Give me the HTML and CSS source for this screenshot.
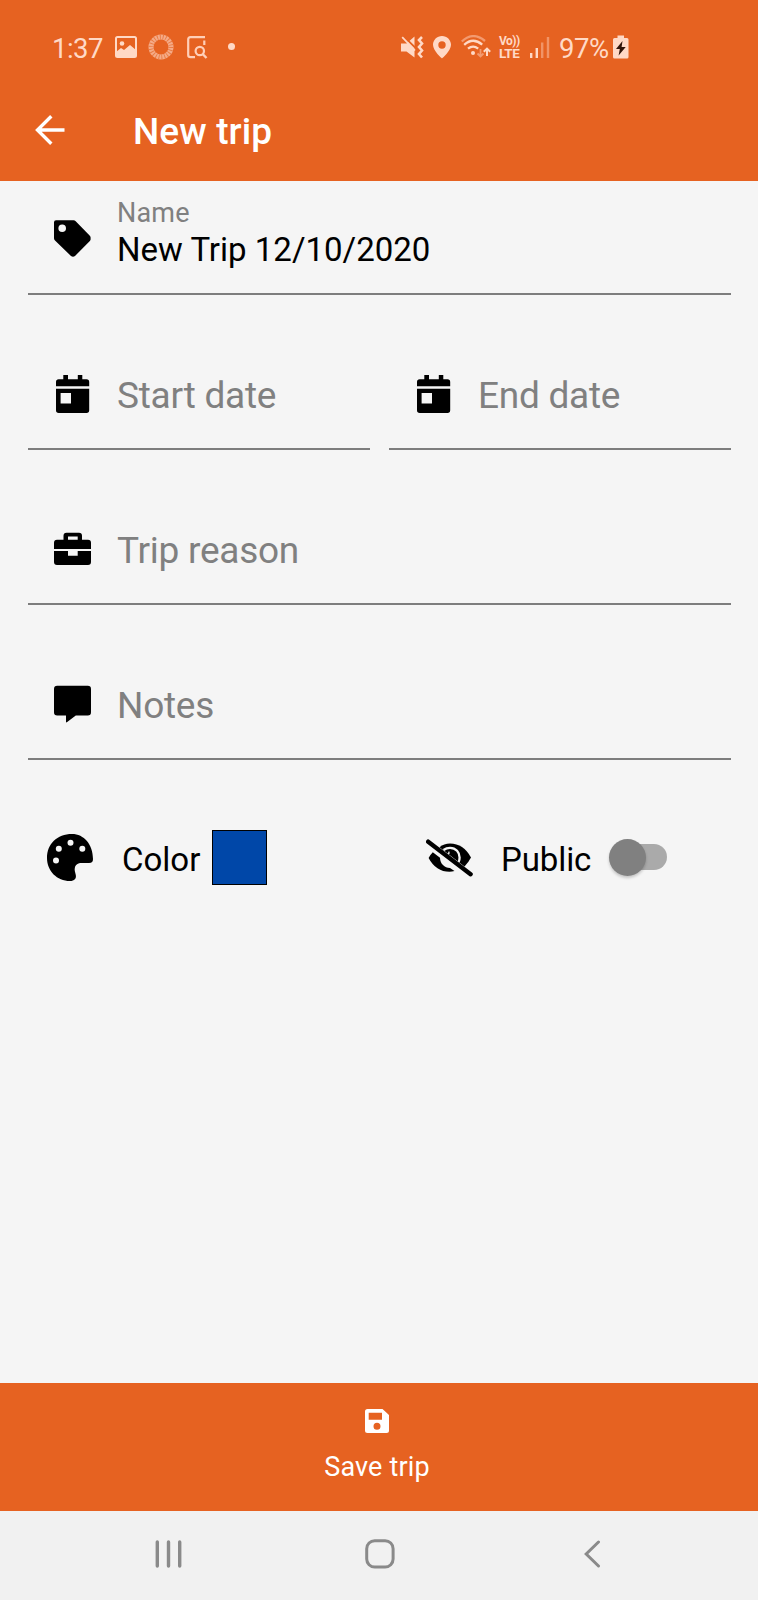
FILE: index.html
```
<!DOCTYPE html>
<html lang="en">
<head>
  <meta charset="UTF-8" />
  <title>New trip</title>
  <link rel="stylesheet" href="styles.css">
</head>
<body>

  <header class="top">
    <div class="status-bar">
      <div class="status-group">
        <span class="clock">1:37</span>
        <svg class="icon-image" width="22" height="22" viewBox="0 0 22 22">
          <rect x="1" y="1" width="20" height="20" rx="1.5" fill="none" stroke="#ffd9c6" stroke-width="2" />
          <circle cx="7" cy="7.5" r="2.3" fill="#ffd9c6" />
          <path d="M1 16 L6 12 L9 14 L15 9 L21 14 V21 H1 Z" fill="#ffd9c6" />
        </svg>
        <svg class="icon-ring" width="26" height="26" viewBox="0 0 26 26">
          <circle cx="13" cy="13" r="10" fill="none" stroke="#f5ab88" stroke-width="5" />
          <circle cx="13" cy="13" r="10" fill="none" stroke="#e97a42" stroke-width="5" stroke-dasharray="0.9 1.955" />
        </svg>
        <svg class="icon-doc" width="21" height="23" viewBox="0 0 21 23" fill="none" stroke="#ffcfb8" stroke-width="2.2">
          <path d="M18 1.2 H3.5 Q1.2 1.2 1.2 3.5 V19 Q1.2 21.2 3.5 21.2 H8 M17.3 4.5 V9" />
          <circle cx="12.8" cy="15" r="4.2" />
          <path d="M15.7 18 L19.5 22" stroke-width="2.4" />
        </svg>
        <span class="dot"></span>
      </div>
      <div class="status-group">
        <svg width="23" height="23" viewBox="0 0 23 23">
          <path d="M0 7.5 H5.5 L13.5 0.5 V21.5 L5.5 15.5 H0 Z" fill="#ffd9c6" />
          <path d="M2.5 0 L15.5 13" stroke="#e66221" stroke-width="1.8" />
          <path d="M1.2 1.2 L14 14.5" stroke="#ffd9c6" stroke-width="1.8" />
          <path d="M21 1 L18 4 L21 7.5 L18 11 L21 14.5 L18 18 L21 21.5" fill="none" stroke="#ffd9c6" stroke-width="2.6" />
        </svg>
        <svg class="icon-pin" width="18" height="23" viewBox="0 0 18 23">
          <path d="M9 0 C4 0 0 4 0 8.8 C0 15 9 22.5 9 22.5 C9 22.5 18 15 18 8.8 C18 4 14 0 9 0 Z M9 5.3 A3.7 3.7 0 1 1 9 12.7 A3.7 3.7 0 1 1 9 5.3 Z" fill="#ffd9c6" fill-rule="evenodd" />
        </svg>
        <svg class="icon-wifi" width="30" height="24" viewBox="0 0 30 24" fill="none" stroke-width="2.3">
          <path d="M0.8 6.5 Q12 -4 24 6" stroke="#f39a70" />
          <path d="M3.2 9.8 Q12 1.8 21.2 9.6" stroke="#ffd9c6" />
          <path d="M7 13.7 Q12 9.5 17.2 13.6" stroke="#ffd9c6" />
          <circle cx="12" cy="18" r="2" fill="#ffd9c6" />
          <path d="M19.5 14 V21 M16.5 18.5 L19.5 21.5 L22.5 18.5" stroke="#f39a70" stroke-width="1.8" />
          <path d="M26 21 V14 M22.8 16.8 L26 13.6 L29.2 16.8" stroke="#ffd9c6" stroke-width="2" />
        </svg>
        <span class="volte"><span class="vo">Vo))</span><span>LTE</span></span>
        <svg class="icon-signal" width="20" height="21" viewBox="0 0 20 21">
          <path d="M0 16 H2.4 V21 H0 Z M5.6 11 H8 V21 H5.6 Z" fill="#ffd9c6" />
          <path d="M11 5.5 H13.4 V21 H11 Z M16.8 0 H19.2 V21 H16.8 Z" fill="#f19467" />
        </svg>
        <span class="battery-text">97%</span>
        <svg class="icon-battery" width="16" height="24" viewBox="0 0 16 24">
          <path d="M4.5 0.5 H11 V3 H14 Q15.5 3 15.5 4.5 V22 Q15.5 23.5 14 23.5 H1.5 Q0 23.5 0 22 V4.5 Q0 3 1.5 3 H4.5 Z" fill="#ffd9c6" />
          <path d="M9.5 6 L3 14 H6.8 L5.6 20.5 L12.7 12 H8.6 Z" fill="#30150a" />
        </svg>
      </div>
    </div>

    <div class="app-bar">
      <svg class="back" width="30" height="30" viewBox="0 0 30 30" fill="none" stroke="#fff" stroke-width="3.4">
        <path d="M29.5 15 H2.5 M16.3 1.2 L2.5 15 L16.3 28.8" />
      </svg>
      <h1>New trip</h1>
    </div>
  </header>

  <main class="form">
    <div class="field name-field">
      <svg class="field-icon" width="38" height="38" viewBox="0 0 38 38">
        <path d="M2 0.3 H19.5 Q20.8 0.3 21.7 1.2 L35.6 15.5 Q36.6 16.5 36.6 17.5 V19.5 Q36.6 20.3 35.6 21.3 L21 36 Q19 37.6 17 36 L1 20.5 Q0 19.5 0 18.2 V2.3 Q0 0.3 2 0.3 Z M8.2 4.5 A3.8 3.8 0 1 0 8.2 12.1 A3.8 3.8 0 1 0 8.2 4.5 Z" fill-rule="evenodd" />
      </svg>
      <div class="field-text">
        <span class="label">Name</span>
        <span class="value">New Trip 12/10/2020</span>
      </div>
    </div>

    <div class="row">
      <div class="field">
        <svg class="field-icon" width="38" height="38" viewBox="0 0 38 38">
          <path d="M9.3 0 H14 V4.3 H23.8 V0 H28.3 V4.3 H32.5 Q35.2 4.3 35.2 7 V11.2 H2 V7 Q2 4.3 4.7 4.3 H9.3 Z" />
          <path d="M2 13.8 H35.2 V35.3 Q35.2 38 32.5 38 H4.7 Q2 38 2 35.3 Z M6.6 18 V28.6 H17 V18 Z" fill-rule="evenodd" />
        </svg>
        <span class="placeholder">Start date</span>
      </div>
      <div class="field">
        <svg class="field-icon" width="38" height="38" viewBox="0 0 38 38">
          <path d="M9.3 0 H14 V4.3 H23.8 V0 H28.3 V4.3 H32.5 Q35.2 4.3 35.2 7 V11.2 H2 V7 Q2 4.3 4.7 4.3 H9.3 Z" />
          <path d="M2 13.8 H35.2 V35.3 Q35.2 38 32.5 38 H4.7 Q2 38 2 35.3 Z M6.6 18 V28.6 H17 V18 Z" fill-rule="evenodd" />
        </svg>
        <span class="placeholder">End date</span>
      </div>
    </div>

    <div class="field">
      <svg class="field-icon" width="38" height="38" viewBox="0 -2 38 38">
        <path d="M0 17 V10.7 Q0 7.7 3 7.7 H9.5 V3.7 Q9.5 0.7 12.5 0.7 H25 Q28 0.7 28 3.7 V7.7 H34 Q37 7.7 37 10.7 V17 Z M14 4.6 V7.7 H23.7 V4.6 Z" fill-rule="evenodd" />
        <path d="M0 19 H14 V23.8 H23.7 V19 H37 V30 Q37 33 34 33 H3 Q0 33 0 30 Z" />
      </svg>
      <span class="placeholder">Trip reason</span>
    </div>

    <div class="field">
      <svg class="field-icon" width="38" height="38" viewBox="0 -0.5 38 38">
        <path d="M3.2 0.3 H33.8 Q37 0.3 37 3.5 V26.8 Q37 30 33.8 30 H21.8 L13.2 36.6 Q12 37.5 12 36 V30 H3.2 Q0 30 0 26.8 V3.5 Q0 0.3 3.2 0.3 Z" />
      </svg>
      <span class="placeholder">Notes</span>
    </div>

    <div class="options">
      <div class="option">
        <svg class="palette" width="46" height="47" viewBox="0 0 46 47">
          <path d="M25 0 C10 0 0 10 0 24 C0 37 10 47 23 47 C27.5 47 29.5 44.5 28.8 41 C28.2 38 27.3 36.5 27.8 34 C28.4 30.5 31 29 34.5 29 H42 C45 29 46 27.8 46 25 C46 10.5 37 0 25 0 Z" />
          <g fill="#f5f5f5">
            <circle cx="11.8" cy="14.8" r="3" />
            <circle cx="23.5" cy="8.7" r="3" />
            <circle cx="35.3" cy="14.8" r="3" />
            <circle cx="9" cy="26.4" r="3" />
          </g>
        </svg>
        <span class="option-text">Color</span>
        <span class="swatch"></span>
      </div>
      <div class="option">
        <svg class="eye" width="47" height="38" viewBox="0 0 47 38">
          <!-- upper right half of the eye -->
          <path d="M13.5 8.2 Q18 4.6 24 4.6 Q37.5 4.6 45 18.6 Q42.5 23.5 38.5 27.5 Z" />
          <path d="M17.5 11 Q20.5 8.8 24 8.8 C30 8.8 33.6 13.5 33.6 18.5 Q33.6 21 32.6 23" fill="none" stroke="#f5f5f5" stroke-width="2.3" />
          <path d="M22.8 12.6 Q23.6 15.6 20.5 15.6" fill="none" stroke="#f5f5f5" stroke-width="1.4" />
          <!-- lower left half -->
          <path d="M6.8 13.2 L14 18.8 C14.2 25 18.5 28.8 24 29 L28.5 32 Q26 32.8 23.5 32.8 Q10 32.8 2.6 19 Q4.2 15.8 6.8 13.2 Z" />
          <path d="M2.2 2.7 L44.6 35.2" stroke="#000" stroke-width="4.4" stroke-linecap="round" />
        </svg>
        <span class="option-text public">Public</span>
        <span class="switch"><span class="thumb"></span></span>
      </div>
    </div>
  </main>

  <footer class="save-bar">
    <svg width="24" height="24" viewBox="0 0 24 24">
      <path d="M2.5 0 H17.5 L24 6 V21.5 Q24 24 21.5 24 H2.5 Q0 24 0 21.5 V2.5 Q0 0 2.5 0 Z M3.7 3.8 V10.7 H17 V3.8 Z M12 13.8 A3.5 3.5 0 1 0 12 20.8 A3.5 3.5 0 1 0 12 13.8 Z" fill="#fff" fill-rule="evenodd" />
    </svg>
    <span>Save trip</span>
  </footer>

  <nav class="nav-bar">
    <svg width="27" height="28" viewBox="0 0 27 28" stroke="#8a8a8a" stroke-width="3.4" stroke-linecap="round">
      <path d="M2.3 2 V26 M13.5 2 V26 M24.7 2 V26" />
    </svg>
    <svg class="home" width="30" height="30" viewBox="0 0 30 30">
      <rect x="1.7" y="1.7" width="26.4" height="26.4" rx="8" fill="none" stroke="#8a8a8a" stroke-width="3" />
    </svg>
    <svg class="nav-back" width="17" height="28" viewBox="0 0 17 28" fill="none" stroke="#8a8a8a" stroke-width="3" stroke-linecap="round">
      <path d="M14.5 2 L2.2 14 L14.5 26" />
    </svg>
  </nav>

</body>
</html>
```
FILE: styles.css
```
* {
  box-sizing: border-box;
}

body {
  margin: 0;
  width: 758px;
  height: 1600px;
  display: flex;
  flex-direction: column;
  overflow: hidden;
  font-family: Roboto, Arial, sans-serif;
  background: #f5f5f5;
  color: #000;
}

svg {
  display: block;
  flex: none;
}

/* status bar and title */
.top {
  height: 181px;
  background: #e66221;
  color: white;
}

.status-bar {
  height: 94px;
  display: flex;
  justify-content: space-between;
  padding: 0 129px 0 52px;
  color: #ffd9c6;
}

.status-group {
  display: flex;
  align-items: center;
}

.clock,
.battery-text {
  font-size: 27.5px;
  line-height: 32px;
  padding-top: 3px;
}

.clock {
  width: 63px;
  letter-spacing: -0.5px;
}

.icon-ring {
  margin-left: 11px;
}

.icon-doc {
  margin-left: 13px;
}

.dot {
  width: 7px;
  height: 7px;
  margin: -2px 0 0 20px;
  border-radius: 50%;
  background: #ffd9c6;
}

.icon-pin {
  margin-left: 9px;
}

.icon-wifi {
  margin-left: 10px;
}

.volte {
  display: flex;
  flex-direction: column;
  width: 23px;
  margin-left: 8px;
  font-size: 13.5px;
  font-weight: 700;
  line-height: 13px;
  letter-spacing: -0.5px;
}

.vo {
  font-size: 12px;
  line-height: 12px;
}

.icon-signal {
  margin-left: 8px;
}

.battery-text {
  width: 54px;
  margin-left: 9px;
  letter-spacing: -0.4px;
}

.app-bar {
  display: flex;
  align-items: center;
  height: 72px;
  padding-left: 35px;
}

h1 {
  margin: 4px 0 0 68px;
  font-size: 37px;
  font-weight: 500;
  line-height: 44px;
  letter-spacing: 0.1px;
}

/* form */
.form {
  height: 1202px;
  padding: 0 27px 0 28px;
}

.row {
  display: grid;
  grid-template-columns: 342px 342px;
  gap: 19px;
}

.field {
  display: flex;
  align-items: center;
  height: 155px;
  padding: 45px 0 0 26px;
  border-bottom: 2px solid #7d7d7d;
}

.field-icon {
  margin-right: 25px;
}

.placeholder {
  padding-top: 3px;
  font-size: 37px;
  line-height: 44px;
  letter-spacing: -0.25px;
  color: #808080;
}

.name-field {
  height: 114px;
  padding-top: 4px;
}

.field-text {
  display: flex;
  flex-direction: column;
  padding-bottom: 10px;
}

.label {
  font-size: 27px;
  line-height: 32px;
  letter-spacing: 0.2px;
  color: #808080;
}

.value {
  font-size: 33px;
  line-height: 42px;
}

.options {
  display: grid;
  grid-template-columns: 379px 1fr;
  padding: 70px 0 0 19px;
}

.option {
  display: flex;
  align-items: center;
  height: 55px;
}

.option-text {
  width: 90px;
  margin-left: 29px;
  padding-top: 5px;
  font-size: 33px;
  line-height: 40px;
}

.public {
  width: 114px;
  margin-left: 28px;
  letter-spacing: -0.1px;
}

.swatch {
  width: 55px;
  height: 55px;
  background: #0047a8;
  border: 1px solid #000;
}

.switch {
  display: flex;
  align-items: center;
  width: 52px;
  height: 26px;
  margin-top: -1px;
  border-radius: 13px;
  background: #aaa;
}

.thumb {
  flex: none;
  width: 37px;
  height: 37px;
  margin-left: -6px;
  border-radius: 50%;
  background: #808080;
  box-shadow: 0 2px 3px rgba(0,0,0,0.2);
}

/* bottom */
.save-bar {
  display: flex;
  flex-direction: column;
  align-items: center;
  height: 128px;
  padding: 26px 4px 0 0;
  background: #e66221;
  color: white;
  font-size: 27px;
  line-height: 32px;
  letter-spacing: 0.15px;
}

.save-bar span {
  margin-top: 18px;
}

.nav-bar {
  display: flex;
  align-items: center;
  height: 89px;
  padding: 0 0 3px 155px;
  background: #f1f1f1;
}

.home {
  margin-left: 183px;
}

.nav-back {
  margin-left: 189px;
}
```
